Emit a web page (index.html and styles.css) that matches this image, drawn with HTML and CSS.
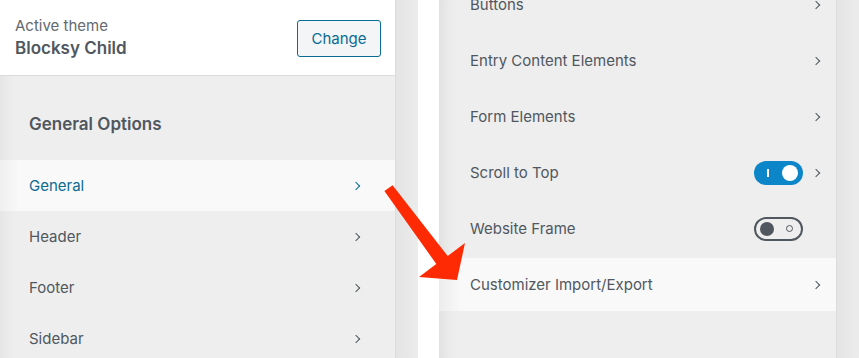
FILE: index.html
```html
<!DOCTYPE html>
<html lang="en">
<head>
    <meta charset="UTF-8">
    <title>Customizer</title>
    <link rel="stylesheet" href="styles.css">
</head>
<body>
    <div class="screen">
        <div class="pane pane-left">
            <div class="theme-box">
                <div class="theme-info">
                    <div class="theme-label">Active theme</div>
                    <div class="theme-name">Blocksy Child</div>
                </div>
                <button class="change-btn">Change</button>
            </div>
            <div class="pane-body">
                <h3 class="section-title">General Options</h3>
                <ul class="menu menu-left">
                    <li class="row active"><span>General</span><i class="chev"></i></li>
                    <li class="row"><span>Header</span><i class="chev"></i></li>
                    <li class="row"><span>Footer</span><i class="chev"></i></li>
                    <li class="row"><span>Sidebar</span><i class="chev"></i></li>
                </ul>
            </div>
        </div>
        <div class="strip"></div>
        <div class="gap"></div>
        <div class="pane pane-right">
            <ul class="menu menu-right">
                <li class="row"><span>Buttons</span><i class="chev"></i></li>
                <li class="row"><span>Entry Content Elements</span><i class="chev"></i></li>
                <li class="row"><span>Form Elements</span><i class="chev"></i></li>
                <li class="row">
                    <span>Scroll to Top</span>
                    <span class="toggle on"><b></b></span>
                    <i class="chev"></i>
                </li>
                <li class="row">
                    <span>Website Frame</span>
                    <span class="toggle off"><b></b></span>
                    <i class="chev hidden"></i>
                </li>
                <li class="row active"><span>Customizer Import/Export</span><i class="chev"></i></li>
            </ul>
        </div>
        <div class="strip strip-end"></div>

        <!-- pointer arrow drawn over the screenshot -->
        <svg class="arrow" width="859" height="358" viewBox="0 0 859 358">
            <polygon points="384.4,190.9 392.6,185.2 447.7,256 465,243 457,280 419,277 436.3,264" fill="#fe2a04"/>
        </svg>
    </div>
</body>
</html>
```

FILE: styles.css
```css
body {
    margin: 0;
    font-family: Inter, "Noto Sans", sans-serif;
    color: #50575e;
    background-color: #fff;
}

.screen {
    position: relative;
    display: flex;
    width: 859px;
    height: 358px;
    overflow: hidden;
}

.pane {
    background-color: #eee;
    border-right: 1px solid #dcdcde;
    flex-shrink: 0;
}

.pane-left {
    width: 395px;
}

.pane-right {
    width: 397px;
    box-shadow: inset 18px 0 16px -14px rgba(0, 0, 0, 0.07);
}

.strip {
    width: 22px;
    background: linear-gradient(to right, #e4e4e4, #ececec);
    flex-shrink: 0;
}

.strip-end {
    flex-grow: 1;
}

.gap {
    width: 21px;
    background-color: #fff;
    flex-shrink: 0;
}

/* theme box */
.theme-box {
    height: 75px;
    background-color: #fff;
    border-bottom: 1px solid #dcdcde;
    display: flex;
    align-items: center;
    justify-content: space-between;
    padding: 0 14px 0 15px;
}

.theme-label {
    font-size: 15px;
    color: #646970;
    line-height: 20px;
}

.theme-name {
    font-size: 17px;
    font-weight: 600;
    color: #50575e;
    line-height: 22px;
    margin-top: 1px;
}

.change-btn {
    width: 84px;
    height: 37px;
    font-family: inherit;
    font-size: 15px;
    color: #0a6b93;
    background-color: #f3f5f6;
    border: 1px solid #0a6b93;
    border-radius: 3px;
    margin-top: 1px;
}

.pane-body {
    box-shadow: inset 16px 0 16px -14px rgba(0, 0, 0, 0.06);
    height: 282px;
}

.section-title {
    margin: 0;
    height: 84px;
    box-sizing: border-box;
    padding: 38px 0 0 29px;
    font-size: 17px;
    font-weight: 600;
    color: #50575e;
}

/* menu rows */
.menu {
    list-style: none;
    margin: 0;
    padding: 0;
}

.row {
    display: flex;
    align-items: center;
    font-size: 15px;
    color: #50575e;
}

.row span:first-child {
    flex-grow: 1;
}

.menu-left .row {
    height: 51px;
    padding: 0 34px 0 29px;
}

.menu-left .row.active {
    color: #0a6b93;
    background: linear-gradient(to right, #efefef, #f9f9f9 20px);
}

.menu-right {
    margin-top: -22px;
}

.menu-right .row {
    height: 53px;
    margin-bottom: 3px;
    padding: 0 15px 0 31px;
}

.menu-right .row.active {
    background: linear-gradient(to right, #ececec, #f9f9f9 22px);
}

.chev {
    width: 5px;
    height: 5px;
    border-top: 1.5px solid currentColor;
    border-right: 1.5px solid currentColor;
    transform: rotate(45deg);
    margin-left: 10px;
    margin-right: 2px;
}

.chev.hidden {
    visibility: hidden;
}

/* toggles */
.toggle {
    position: relative;
    width: 49px;
    height: 24px;
    box-sizing: border-box;
    border-radius: 12px;
    display: inline-block;
}

.toggle.on {
    background-color: #0c86c8;
}

.toggle.on::before {
    content: "";
    position: absolute;
    left: 13px;
    top: 8px;
    width: 2px;
    height: 8px;
    background-color: #fff;
}

.toggle.on b {
    position: absolute;
    right: 5px;
    top: 4px;
    width: 16px;
    height: 16px;
    border-radius: 50%;
    background-color: #fff;
}

.toggle.off {
    border: 2px solid #50575e;
}

.toggle.off b {
    position: absolute;
    left: 4px;
    top: 3px;
    width: 14px;
    height: 14px;
    border-radius: 50%;
    background-color: #50575e;
}

.toggle.off::after {
    content: "";
    position: absolute;
    right: 8px;
    top: 6px;
    width: 5px;
    height: 5px;
    border: 1.5px solid #50575e;
    border-radius: 50%;
}

.arrow {
    position: absolute;
    left: 0;
    top: 0;
    pointer-events: none;
}
```
